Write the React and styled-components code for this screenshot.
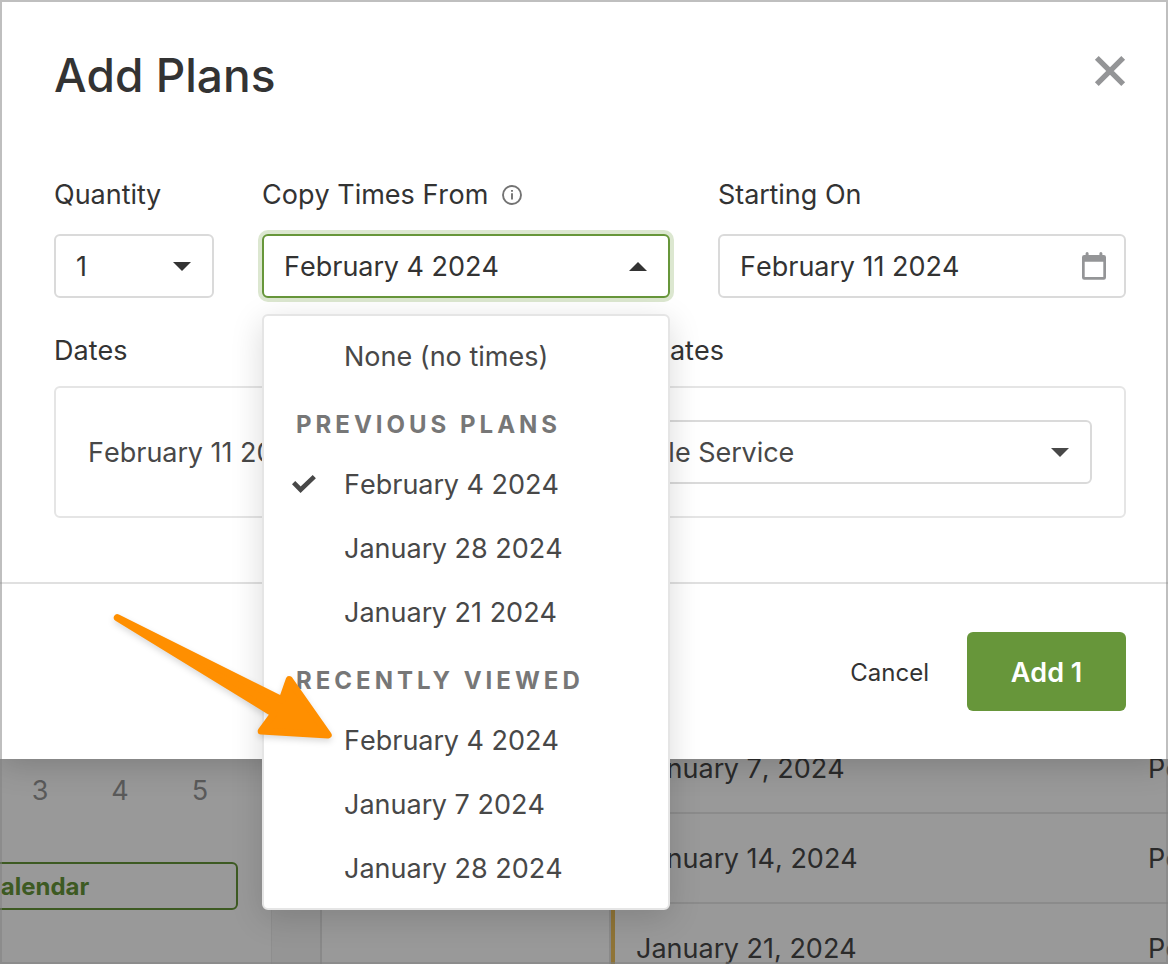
import React, { useState } from "react";
import styled, { createGlobalStyle } from "styled-components";

const GlobalStyle = createGlobalStyle`
  * { box-sizing: border-box; }
  body {
    margin: 0;
    font-family: Inter, "Liberation Sans", sans-serif;
    font-size: 27px;
    line-height: 32px;
    font-kerning: none;
    color: #333;
  }
  button, select, input { font: inherit; color: inherit; }
`;

/* ---------- page behind the modal ---------- */

const Screen = styled.div`
  position: relative;
  height: 100vh;
  overflow: hidden;
  background: #fff;

  &::after {
    content: "";
    position: absolute;
    inset: 0;
    border: 2px solid rgba(128, 128, 128, 0.5);
    pointer-events: none;
  }
`;

const Page = styled.div`
  display: flex;
  align-items: stretch;
  height: 100%;
  padding-top: 724px;
  overflow: hidden;
`;

const Sidebar = styled.aside`
  flex: none;
  width: 272px;
  padding-top: 34px;
  border-right: 1px solid #ededed;
`;

const Week = styled.div`
  display: grid;
  grid-template-columns: repeat(3, 80px);
  height: 66px;
  align-items: center;
  text-align: center;
  color: #979797;
`;

const CalendarButton = styled.button`
  display: block;
  width: 260px;
  height: 48px;
  margin: 38px 0 0 -22px;
  padding: 2px 0 0 3px;
  text-align: left;
  font-size: 24px;
  font-weight: 700;
  color: #67963a;
  background: #fff;
  border: 2px solid #67963a;
  border-radius: 6px;
`;

const Gutter = styled.div`
  flex: none;
  width: 48px;
  background: #f9f9f9;
`;

const Panel = styled.div`
  flex: none;
  width: 291px;
  border: solid #e5e5e5;
  border-width: 0 2px;
`;

const TableWrap = styled.div`
  flex: 1;
  min-width: 0;
  border-left: 4px solid #eec15c;
`;

const PlansTable = styled.table`
  width: 100%;
  table-layout: fixed;
  border-collapse: separate;
  border-spacing: 0;
  color: #494949;
  white-space: nowrap;

  td {
    height: 90px;
    padding: 2px 0 0 21px;
    border-bottom: 2px solid #e8e8e8;
  }
  td + td {
    width: 20px;
    padding-left: 0;
  }
`;

/* ---------- modal ---------- */

const Overlay = styled.div`
  position: absolute;
  inset: 0;
  background: rgba(0, 0, 0, 0.4);
`;

const Modal = styled.section`
  position: relative;
  background: #fff;
  box-shadow: 0 4px 32px rgba(0, 0, 0, 0.2);
`;

const Header = styled.header`
  display: flex;
  justify-content: space-between;
  align-items: flex-start;
  height: 142px;
  padding: 47px 42px 0 54px;
`;

const Title = styled.h1`
  margin: 0;
  font-size: 46px;
  line-height: 56px;
  font-weight: 500;
`;

const CloseButton = styled.button`
  display: flex;
  padding: 8px 0;
  border: 0;
  background: none;
  color: #949597;
`;

const Body = styled.div`
  padding: 36px 42px 64px 54px;
`;

const Fields = styled.div`
  display: grid;
  grid-template-columns: 160px 1fr 1fr;
  gap: 48px;
`;

const Field = styled.div`
  position: relative;
  min-width: 0;
`;

const Label = styled.label`
  display: flex;
  align-items: center;
  gap: 14px;
  height: 34px;
  margin-bottom: 22px;
`;

const Control = styled.div`
  display: flex;
  position: relative;
  align-items: center;
  height: 64px;
  border: 2px solid ${(p) => (p.$open ? "#67963a" : "#dadada")};
  border-radius: 6px;
  background: #fff;
  box-shadow: ${(p) => (p.$open ? "0 0 0 4px #dce7d0" : "none")};

  svg {
    position: absolute;
    right: ${(p) => p.$iconRight || 21}px;
    pointer-events: none;
  }
`;

const Select = styled.select`
  width: 100%;
  height: 100%;
  padding: 2px 20px 0;
  border: 0;
  outline: 0;
  background: transparent;
  appearance: none;
`;

const TextBox = styled.input`
  width: 100%;
  height: 100%;
  padding: 0 20px;
  border: 0;
  outline: 0;
  background: transparent;
`;

const DatesHead = styled.div`
  display: grid;
  grid-template-columns: 1fr 1fr;
  margin: 36px 0 18px;
  line-height: 34px;
`;

const DatesBox = styled.div`
  display: grid;
  grid-template-columns: 1fr 1fr;
  align-items: center;
  padding: 32px;
  border: 2px solid #e5e5e5;
  border-radius: 6px;
  color: #484848;
`;

const DateText = styled.span`
  padding-top: 2px;
`;

const Footer = styled.footer`
  display: flex;
  justify-content: flex-end;
  align-items: center;
  gap: 38px;
  padding: 48px 42px 48px 54px;
  border-top: 2px solid #e0e0e0;
`;

const CancelButton = styled.button`
  padding: 2px 0 0;
  border: 0;
  background: none;
  font-size: 24px;
`;

const AddButton = styled.button`
  width: 159px;
  height: 79px;
  padding: 2px 0 0;
  border: 0;
  border-radius: 6px;
  background: #67963a;
  color: #fff;
  font-weight: 600;
`;

const Menu = styled.ul`
  position: absolute;
  z-index: 1;
  top: calc(100% + 16px);
  left: 0;
  right: 0;
  margin: 0;
  padding: 8px 0;
  list-style: none;
  background: #fff;
  border: 2px solid #e5e5e5;
  border-radius: 6px;
  box-shadow: 0 8px 32px rgba(0, 0, 0, 0.15);
`;

const MenuHeading = styled.li`
  height: 64px;
  padding: 21px 0 0 32px;
  font-size: 24px;
  font-weight: 700;
  font-kerning: normal;
  letter-spacing: 4px;
  text-transform: uppercase;
  color: #777;
`;

const MenuItem = styled.button`
  display: flex;
  align-items: center;
  width: 100%;
  height: 64px;
  padding: 2px 28px 0;
  border: 0;
  background: none;
  color: #484848;
`;

const Tick = styled.span`
  display: flex;
  width: 52px;
  padding-bottom: 2px;
`;

const Pointer = styled.svg`
  position: absolute;
  z-index: 2;
  top: 600px;
  left: 100px;
  pointer-events: none;
  filter: drop-shadow(0 3px 3px rgba(0, 0, 0, 0.15));
`;

const Caret = ({ up }) => (
  <svg width="18" height="9" viewBox="0 0 18 9" fill="currentColor" aria-hidden="true">
    <path d={up ? "M0 9 9 0l9 9z" : "M0 0h18L9 9z"} />
  </svg>
);

const CloseIcon = () => (
  <svg width="32" height="32" viewBox="0 0 32 32" stroke="currentColor" strokeWidth="5.4" aria-hidden="true">
    <path d="M2.8 2.8l26.4 26.4M29.2 2.8L2.8 29.2" />
  </svg>
);

const InfoIcon = () => (
  <svg width="20" height="20" viewBox="0 0 20 20" fill="none" stroke="#737373" strokeWidth="1.9" aria-hidden="true">
    <circle cx="10" cy="10" r="9" />
    <path d="M10 8.2v6.4M10 4.9v1.9" />
  </svg>
);

const CalendarIcon = () => (
  <svg width="24" height="28" viewBox="0 0 24 28" fill="#949597" aria-hidden="true">
    <path
      fillRule="evenodd"
      d="M3.6 1.5a1.5 1.5 0 0 1 3 0V3h10.800V1.500a1.500 1.500 0 0 1 3 0V3h1.400A2.200 2.200 0 0 1 24 5.200v20.300a2.200 2.200 0 0 1-2.200 2.200H2.200A2.200 2.200 0 0 1 0 25.500V5.200A2.200 2.200 0 0 1 2.200 3h1.400zM2.700 9.700v15.300h18.600V9.700z"
    />
  </svg>
);

const CheckIcon = () => (
  <svg width="24" height="18" viewBox="0 0 24 18" fill="none" stroke="currentColor" strokeWidth="4.6" aria-hidden="true">
    <path d="M1.6 7.7l7 7L22.3 1.700" />
  </svg>
);

const groups = [
  { title: "Previous Plans", items: ["February 4 2024", "January 28 2024", "January 21 2024"] },
  { title: "Recently Viewed", items: ["February 4 2024", "January 7 2024", "January 28 2024"] },
];

const CopyMenu = ({ picked, onPick }) => (
  <Menu>
    <li>
      <MenuItem type="button" onClick={() => onPick("None (no times)", "none")}>
        <Tick>{picked === "none" && <CheckIcon />}</Tick>
        None (no times)
      </MenuItem>
    </li>
    {groups.map((group, g) => (
      <React.Fragment key={group.title}>
        <MenuHeading>{group.title}</MenuHeading>
        {group.items.map((item, i) => (
          <li key={item}>
            <MenuItem type="button" onClick={() => onPick(item, `${g}-${i}`)}>
              <Tick>{picked === `${g}-${i}` && <CheckIcon />}</Tick>
              {item}
            </MenuItem>
          </li>
        ))}
      </React.Fragment>
    ))}
  </Menu>
);

const App = () => {
  const [open, setOpen] = useState(true);
  const [copy, setCopy] = useState({ text: "February 4 2024", id: "0-0" });

  const pick = (text, id) => {
    setCopy({ text, id });
    setOpen(false);
  };

  return (
    <Screen>
      <GlobalStyle />
      <Page>
        <Sidebar>
          <Week>
            <span>3</span>
            <span>4</span>
            <span>5</span>
          </Week>
          <CalendarButton type="button">Calendar</CalendarButton>
        </Sidebar>
        <Gutter />
        <Panel />
        <TableWrap>
          <PlansTable>
            <tbody>
              {["January 7, 2024", "January 14, 2024", "January 21, 2024"].map((date) => (
                <tr key={date}>
                  <td>{date}</td>
                  <td>Po</td>
                </tr>
              ))}
            </tbody>
          </PlansTable>
        </TableWrap>
      </Page>

      <Overlay>
        <Modal role="dialog" aria-labelledby="modal-title">
          <Header>
            <Title id="modal-title">Add Plans</Title>
            <CloseButton type="button" aria-label="Close">
              <CloseIcon />
            </CloseButton>
          </Header>
          <Body>
            <Fields>
              <Field>
                <Label htmlFor="quantity">Quantity</Label>
                <Control>
                  <Select id="quantity" defaultValue="1">
                    <option>1</option>
                    <option>2</option>
                    <option>3</option>
                  </Select>
                  <Caret />
                </Control>
              </Field>
              <Field>
                <Label htmlFor="copy-from">
                  Copy Times From <InfoIcon />
                </Label>
                <Control $open={open}>
                  <Select
                    id="copy-from"
                    value={copy.text}
                    onChange={(e) => setCopy({ text: e.target.value, id: "" })}
                    onMouseDown={(e) => {
                      e.preventDefault();
                      setOpen(!open);
                    }}
                  >
                    <option>{copy.text}</option>
                  </Select>
                  <Caret up={open} />
                </Control>
                {open && <CopyMenu picked={copy.id} onPick={pick} />}
              </Field>
              <Field>
                <Label htmlFor="starting-on">Starting On</Label>
                <Control $iconRight={18}>
                  <TextBox id="starting-on" type="text" defaultValue="February 11 2024" />
                  <CalendarIcon />
                </Control>
              </Field>
            </Fields>

            <DatesHead>
              <span>Dates</span>
              <label htmlFor="template">Templates</label>
            </DatesHead>
            <DatesBox>
              <DateText>February 11 2024</DateText>
              <Control>
                <Select id="template" defaultValue="Single Service">
                  <option>Single Service</option>
                </Select>
                <Caret />
              </Control>
            </DatesBox>
          </Body>
          <Footer>
            <CancelButton type="button">Cancel</CancelButton>
            <AddButton type="button">Add 1</AddButton>
          </Footer>
        </Modal>
        <Pointer width="250" height="150" viewBox="100 600 250 150" aria-hidden="true">
          <path
            d="M117.3 617.7L282.1 700L289.3 679.5L328.2 735L261.2 731L273.8 713.7z"
            fill="#ff8f00"
            stroke="#ff8f00"
            strokeWidth="7"
            strokeLinejoin="round"
          />
        </Pointer>
      </Overlay>
    </Screen>
  );
};

export default App;
